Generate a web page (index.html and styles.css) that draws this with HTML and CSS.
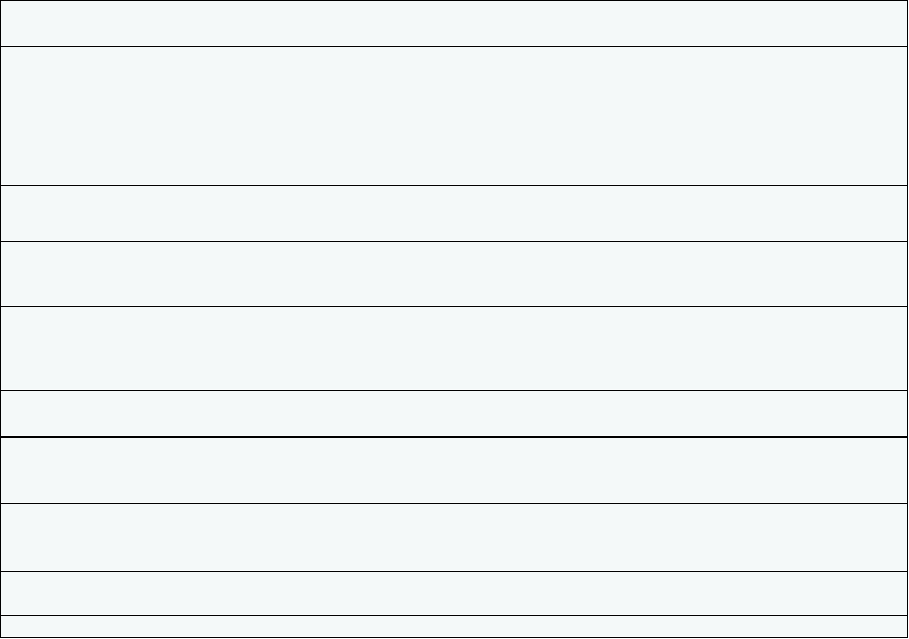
FILE: index.html
```html
<!DOCTYPE html>
<html lang="en">

<head>
    <meta charset="UTF-8">
    <meta name="viewport" content="width=device-width, initial-scale=1.0">
    <title>Table</title>
    <link rel="stylesheet" href="styles.css">
</head>

<body>
    <!-- Empty table rows -->
    <div class="table">
        <div class="row r1"></div>
        <div class="row r2"></div>
        <div class="row r3"></div>
        <div class="row r4"></div>
        <div class="row r5"></div>
        <div class="row r6"></div>
        <div class="row r7"></div>
        <div class="row r8"></div>
        <div class="row r9"></div>
        <div class="row r10"></div>
    </div>
</body>

</html>
```

FILE: styles.css
```css
body {
    font-family: "Liberation Sans", sans-serif;
    margin: 0;
    padding: 0;
    background-color: #fff;
}

.table {
    width: 906px;
    border: 1px solid #000;
    background-color: #f4f9f9;
    display: flex;
    flex-direction: column;
}

.row {
    border-bottom: 1px solid #000;
    box-shadow: inset 0 -3px 0 -2px #fafdfd;
}

.row:last-child {
    border-bottom: none;
}

.r1 { height: 45px; }
.r2 { height: 138px; }
.r3 { height: 55px; }
.r4 { height: 64px; }
.r5 { height: 83px; }
.r6 { height: 45px; border-bottom-width: 2px; }
.r7 { height: 65px; }
.r8 { height: 67px; }
.r9 { height: 43px; }
.r10 { height: 21px; }
```
